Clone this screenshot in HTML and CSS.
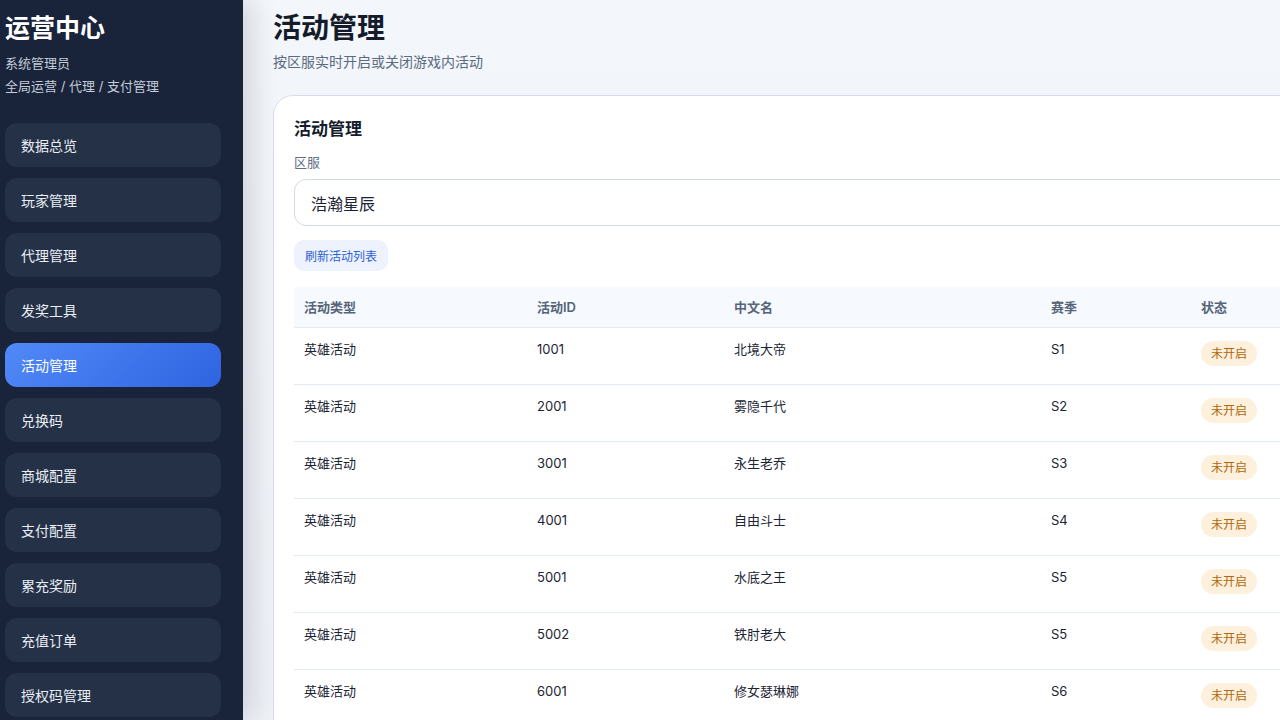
FILE: index.html
```html
<!DOCTYPE html>
<html lang="zh-CN">
<head>
    <meta charset="UTF-8">
    <meta name="viewport" content="width=device-width, initial-scale=1.0">
    <title>运营中心 - 活动管理</title>
    <link rel="stylesheet" href="styles.css">
</head>
<body>
    <aside class="sidebar">
        <div class="marca">运营中心</div>
        <div class="rol">系统管理员</div>
        <div class="rol">全局运营 / 代理 / 支付管理</div>
        <nav class="menu">
            <a class="menu-item">数据总览</a>
            <a class="menu-item">玩家管理</a>
            <a class="menu-item">代理管理</a>
            <a class="menu-item">发奖工具</a>
            <a class="menu-item activo">活动管理</a>
            <a class="menu-item">兑换码</a>
            <a class="menu-item">商城配置</a>
            <a class="menu-item">支付配置</a>
            <a class="menu-item">累充奖励</a>
            <a class="menu-item">充值订单</a>
            <a class="menu-item">授权码管理</a>
        </nav>
    </aside>

    <main class="principal">
        <h1 class="titulo">活动管理</h1>
        <p class="subtitulo">按区服实时开启或关闭游戏内活动</p>

        <section class="tarjeta">
            <h2 class="tarjeta-titulo">活动管理</h2>
            <label class="etiqueta">区服</label>
            <div class="selector">浩瀚星辰</div>
            <button class="boton-refrescar">刷新活动列表</button>

            <table class="tabla">
                <thead>
                    <tr>
                        <th class="col-tipo">活动类型</th>
                        <th class="col-id">活动ID</th>
                        <th class="col-nombre">中文名</th>
                        <th class="col-temporada">赛季</th>
                        <th class="col-estado">状态</th>
                    </tr>
                </thead>
                <tbody>
                    <tr><td>英雄活动</td><td>1001</td><td>北境大帝</td><td>S1</td><td><span class="insignia">未开启</span></td></tr>
                    <tr><td>英雄活动</td><td>2001</td><td>雾隐千代</td><td>S2</td><td><span class="insignia">未开启</span></td></tr>
                    <tr><td>英雄活动</td><td>3001</td><td>永生老乔</td><td>S3</td><td><span class="insignia">未开启</span></td></tr>
                    <tr><td>英雄活动</td><td>4001</td><td>自由斗士</td><td>S4</td><td><span class="insignia">未开启</span></td></tr>
                    <tr><td>英雄活动</td><td>5001</td><td>水底之王</td><td>S5</td><td><span class="insignia">未开启</span></td></tr>
                    <tr><td>英雄活动</td><td>5002</td><td>铁肘老大</td><td>S5</td><td><span class="insignia">未开启</span></td></tr>
                    <tr><td>英雄活动</td><td>6001</td><td>修女瑟琳娜</td><td>S6</td><td><span class="insignia">未开启</span></td></tr>
                </tbody>
            </table>
        </section>
    </main>
</body>
</html>
```

FILE: styles.css
```css
body {
    margin: 0;
    height: 100vh;
    overflow: hidden;
    display: flex;
    font-family: "Inter", "Noto Sans CJK SC", sans-serif;
    background: #f4f7fb;
    color: #1b2434;
}

.sidebar {
    flex: 0 0 243px;
    box-sizing: border-box;
    padding: 12px 22px 0 5px;
    background-color: #19233a;
    color: #ffffff;
    box-shadow: 6px 0 28px rgba(25, 35, 58, 0.18);
    position: relative;
    z-index: 1;
}

.marca {
    font-size: 25px;
    line-height: 32px;
    font-weight: 700;
    margin-bottom: 8px;
}

.rol {
    font-size: 13px;
    line-height: 23px;
    color: #c3ccd9;
}

.menu {
    display: flex;
    flex-direction: column;
    gap: 11px;
    margin-top: 25px;
}

.menu-item {
    display: flex;
    align-items: center;
    height: 44px;
    padding: 0 16px;
    border-radius: 12px;
    background-color: #253146;
    font-size: 14px;
    color: #e9eef6;
}

.menu-item.activo {
    background: linear-gradient(135deg, #5189f8, #2f64e0);
    color: #ffffff;
}

.principal {
    flex: 1;
    min-width: 0;
    overflow: hidden;
    padding: 8px 0 0 30px;
    background: linear-gradient(to bottom, #f3f6fa, #eef1f6);
}

.titulo {
    margin: 0;
    font-size: 28px;
    line-height: 40px;
    font-weight: 700;
    color: #141c2c;
}

.subtitulo {
    margin: 5px 0 0;
    font-size: 14px;
    line-height: 18px;
    color: #5a6b82;
}

.tarjeta {
    margin-top: 24px;
    width: 1120px;
    box-sizing: border-box;
    padding: 20px 20px 20px;
    background-color: #ffffff;
    border: 1px solid #d7dee9;
    border-radius: 20px;
}

.tarjeta-titulo {
    margin: 0;
    font-size: 17px;
    line-height: 26px;
    font-weight: 700;
    color: #141c2c;
}

.etiqueta {
    display: block;
    margin-top: 11px;
    font-size: 13px;
    line-height: 18px;
    color: #606f83;
}

.selector {
    margin-top: 8px;
    height: 45px;
    display: flex;
    align-items: center;
    padding: 0 16px;
    border: 1px solid #d3dae5;
    border-radius: 12px;
    font-size: 16px;
    color: #1b2434;
}

.boton-refrescar {
    margin-top: 14px;
    height: 31px;
    padding: 0 11px;
    border: none;
    border-radius: 10px;
    background-color: #edf2fd;
    color: #2c61d6;
    font-family: inherit;
    font-size: 12px;
}

.tabla {
    margin-top: 16px;
    width: 100%;
    border-collapse: collapse;
    font-size: 13px;
}

.tabla th {
    height: 40px;
    padding: 0 10px;
    text-align: left;
    font-weight: 600;
    line-height: 38px;
    color: #56647a;
    background-color: #f6f9fe;
    border-bottom: 1px solid #e4eaf3;
}

.tabla td {
    height: 32px;
    padding: 12px 10px;
    vertical-align: top;
    line-height: 18px;
    color: #1b2434;
    border-bottom: 1px solid #e4eaf3;
}

.col-tipo { width: 213px; }
.col-id { width: 177px; }
.col-nombre { width: 297px; }
.col-temporada { width: 130px; }

.insignia {
    display: inline-block;
    margin-top: 1px;
    padding: 0 10px;
    height: 25px;
    line-height: 25px;
    border-radius: 13px;
    font-size: 12px;
    background-color: #fdf0dc;
    color: #b0670a;
}
```
